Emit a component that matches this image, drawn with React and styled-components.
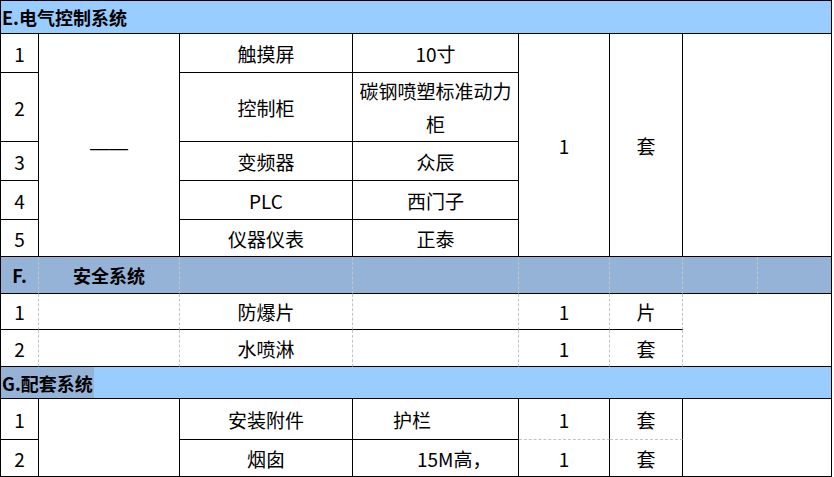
import React from "react";
import styled, { createGlobalStyle, css } from "styled-components";

const Global = createGlobalStyle`
  html, body { margin: 0; padding: 0; background: #ffffff; }
  body { font-family: "Noto Sans CJK SC", "Noto Sans", sans-serif; color: #000; }
`;

const LIGHT = "#99ccff";
const DEEP = "#95b3d7";

const lineFor = (k) =>
  k === "d" ? "1px dashed #c4c4c4" : k === "n" ? "1px solid transparent" : "1px solid #000";

const Sheet = styled.div`
  display: grid;
  width: 832px;
  box-sizing: border-box;
  grid-template-columns: 38px 141px 173px 166px 91px 73px 75px 74px;
  grid-template-rows: 33px 39px 69px 39px 39px 37px 37px 36px 37px 32px 41px 37px;
  border-left: 1px solid #000;
  border-top: 1px solid #000;
`;

const Cell = styled.div`
  box-sizing: border-box;
  grid-column: ${(p) => p.$col} / span ${(p) => p.$span || 1};
  grid-row: ${(p) => p.$row} / span ${(p) => p.$rows || 1};
  border-right: ${(p) => lineFor(p.$r || "s")};
  border-bottom: ${(p) => lineFor(p.$b || "s")};
  background: ${(p) => p.$bg || "#fff"};
  display: flex;
  align-items: center;
  justify-content: ${(p) => (p.$left ? "flex-start" : "center")};
  text-align: ${(p) => (p.$left ? "left" : "center")};
  padding: 0 ${(p) => (p.$left ? 0 : 4)}px 0 ${(p) => (p.$left ? p.$pl || 0 : 4)}px;
  font-size: 19px;
  line-height: 33px;
  overflow: hidden;
  white-space: ${(p) => (p.$left ? "nowrap" : "normal")};
  ${(p) =>
    p.$bold &&
    css`
      font-weight: 700;
      font-size: 18px;
    `}
`;

const SectionBar = styled.div`
  box-sizing: border-box;
  grid-column: 1 / -1;
  grid-row: ${(p) => p.$row};
  background: ${LIGHT};
  border-right: 1px solid #000;
  border-bottom: 1px solid #000;
  display: flex;
  align-items: stretch;
  font-weight: 700;
  font-size: 18px;
`;

const SectionTitle = styled.span`
  display: flex;
  align-items: center;
  padding: 0 1px 0 1px;
  background: ${(p) => (p.$marked ? DEEP : "transparent")};
`;

const Dash = styled.span`
  font-family: "Liberation Sans", sans-serif;
  font-size: 19px;
  position: relative;
  top: 2px;
`;

const eRows = [
  ["1", "触摸屏", "10寸"],
  ["2", "控制柜", "碳钢喷塑标准动力柜"],
  ["3", "变频器", "众辰"],
  ["4", "PLC", "西门子"],
  ["5", "仪器仪表", "正泰"],
];

export default function App() {
  return (
    <>
      <Global />
      <Sheet>
        <SectionBar $row={1}>
          <SectionTitle>E.电气控制系统</SectionTitle>
        </SectionBar>

        {eRows.map(([n, name, spec], i) => (
          <React.Fragment key={n}>
            <Cell $col={1} $row={2 + i}>{n}</Cell>
            <Cell $col={3} $row={2 + i}>{name}</Cell>
            <Cell $col={4} $row={2 + i}>{spec}</Cell>
          </React.Fragment>
        ))}
        <Cell $col={2} $row={2} $rows={5}>
          <Dash>——</Dash>
        </Cell>
        <Cell $col={5} $row={2} $rows={5}>1</Cell>
        <Cell $col={6} $row={2} $rows={5}>套</Cell>
        <Cell $col={7} $span={2} $row={2} $rows={5} />

        <Cell $col={1} $row={7} $bg={DEEP} $r="d" $bold>F.</Cell>
        <Cell $col={2} $row={7} $bg={DEEP} $r="d" $bold>安全系统</Cell>
        <Cell $col={3} $row={7} $bg={DEEP} $r="d" />
        <Cell $col={4} $row={7} $bg={DEEP} $r="d" />
        <Cell $col={5} $row={7} $bg={DEEP} $r="d" />
        <Cell $col={6} $row={7} $bg={DEEP} $r="d" />
        <Cell $col={7} $row={7} $bg={DEEP} $r="d" />
        <Cell $col={8} $row={7} $bg={DEEP} />

        {[
          ["1", "防爆片", "片"],
          ["2", "水喷淋", "套"],
        ].map(([n, name, unit], i) => (
          <React.Fragment key={"f" + n}>
            <Cell $col={1} $row={8 + i} $r="d">{n}</Cell>
            <Cell $col={2} $row={8 + i} $r="d" />
            <Cell $col={3} $row={8 + i} $r="d">{name}</Cell>
            <Cell $col={4} $row={8 + i} $r="d" />
            <Cell $col={5} $row={8 + i} $r="d">1</Cell>
            <Cell $col={6} $row={8 + i} $r="d">{unit}</Cell>
          </React.Fragment>
        ))}
        <Cell $col={7} $span={2} $row={8} $rows={2} />

        <SectionBar $row={10}>
          <SectionTitle $marked>G.配套系统</SectionTitle>
        </SectionBar>

        <Cell $col={1} $row={11}>1</Cell>
        <Cell $col={1} $row={12}>2</Cell>
        <Cell $col={2} $row={11} $rows={2} />
        <Cell $col={3} $row={11}>安装附件</Cell>
        <Cell $col={3} $row={12}>烟囱</Cell>
        <Cell $col={4} $row={11} $left $pl={40}>护栏</Cell>
        <Cell $col={4} $row={12} $left $pl={64}>15M高，</Cell>
        <Cell $col={5} $row={11} $b="d">1</Cell>
        <Cell $col={5} $row={12}>1</Cell>
        <Cell $col={6} $row={11} $b="d">套</Cell>
        <Cell $col={6} $row={12}>套</Cell>
        <Cell $col={7} $span={2} $row={11} $rows={2} />
      </Sheet>
    </>
  );
}
